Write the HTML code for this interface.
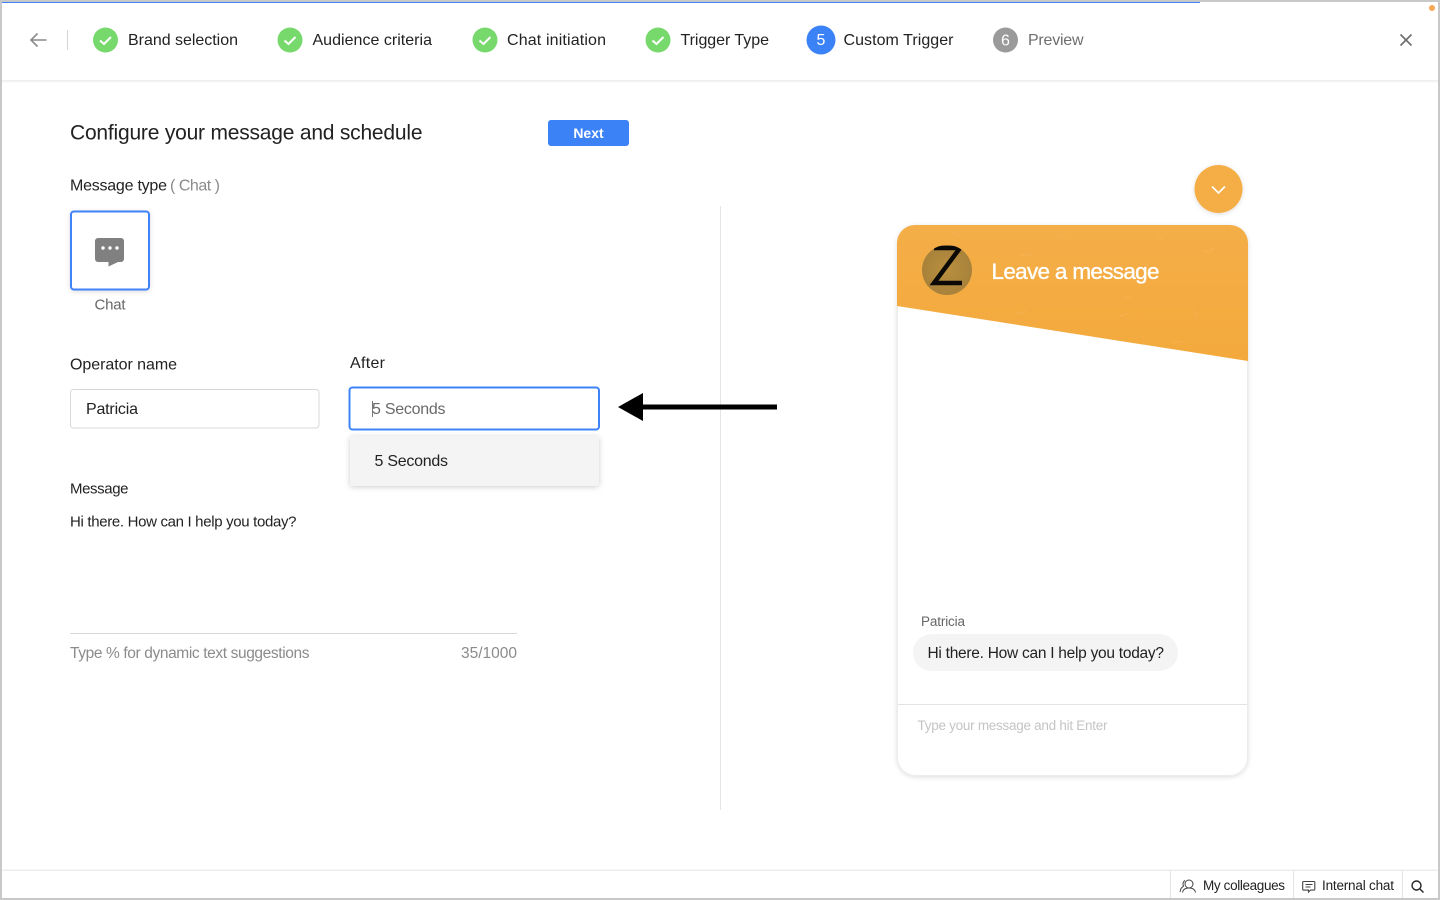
<!DOCTYPE html>
<html lang="en"><head><meta charset="utf-8"><title>Configure your message and schedule</title>
<style>
html,body{margin:0;padding:0;width:1440px;height:900px;overflow:hidden;background:#fff}
svg{display:block}
text{font-family:"Liberation Sans",Arial,sans-serif;font-size:16px;fill:#222}
</style></head><body>
<svg width="1440" height="900" viewBox="0 0 1440 900" xmlns="http://www.w3.org/2000/svg">
<defs>
<filter id="s1" x="-20%" y="-20%" width="140%" height="140%"><feDropShadow dx="0" dy="1" stdDeviation="3" flood-color="#000" flood-opacity=".2"/></filter>
<filter id="s2" x="-10%" y="-10%" width="120%" height="120%"><feDropShadow dx="0" dy="1" stdDeviation="2.5" flood-color="#000" flood-opacity=".14"/></filter>
<linearGradient id="hd" x1="0" y1="0" x2="0" y2="1"><stop offset="0" stop-color="#f4ae48"/><stop offset="1" stop-color="#f3a93c"/></linearGradient>
<radialGradient id="av" cx=".5" cy=".5" r=".6"><stop offset="0" stop-color="#b98f3f"/><stop offset="1" stop-color="#a57f3a"/></radialGradient>
<clipPath id="av-clip"><circle cx="947" cy="270" r="25"/></clipPath>
</defs>
<rect width="1440" height="900" fill="#fff"/>

<!-- Window frame and progress -->
<rect x="0" y="0" width="1440" height="2" fill="#c8c8c8"/>
<rect x="0" y="0" width="2" height="900" fill="#c8c8c8"/>
<rect x="1438" y="0" width="2" height="900" fill="#c8c8c8"/>
<rect x="0" y="898" width="1440" height="2" fill="#c8c8c8"/>
<rect x="2" y="2" width="1198" height="1" fill="#3f83f8"/>
<circle cx="1432" cy="8" r="3" fill="#f6a953"/>

<!-- Top bar -->
<rect x="2" y="82" width="1436" height="1" fill="#fafafa"/>
<rect x="2" y="81" width="1436" height="1" fill="#f6f6f6"/>
<rect x="2" y="80" width="1436" height="1" fill="#eeeeee"/>
<path d="M46.500 40H31M37.500 33.500L31 40l6.500 6.500" fill="none" stroke="#8a8a8a" stroke-width="1.600"/>
<rect x="67" y="30" width="1" height="20" fill="#d5d5d5"/>

<circle cx="105.500" cy="40" r="12.500" fill="#77d86c"/><path d="M100 40.500l4 3.500 7-7" fill="none" stroke="#fff" stroke-width="2"/>
<text x="128" y="45" textLength="110" lengthAdjust="spacing">Brand selection</text>
<circle cx="290" cy="40" r="12.500" fill="#77d86c"/><path d="M284.500 40.500l4 3.500 7-7" fill="none" stroke="#fff" stroke-width="2"/>
<text x="312.500" y="45" textLength="119.500" lengthAdjust="spacing">Audience criteria</text>
<circle cx="485" cy="40" r="12.500" fill="#77d86c"/><path d="M479.500 40.500l4 3.500 7-7" fill="none" stroke="#fff" stroke-width="2"/>
<text x="507" y="45" textLength="99" lengthAdjust="spacing">Chat initiation</text>
<circle cx="658" cy="40" r="12.500" fill="#77d86c"/><path d="M652.500 40.500l4 3.500 7-7" fill="none" stroke="#fff" stroke-width="2"/>
<text x="680.500" y="45" textLength="88.500" lengthAdjust="spacing">Trigger Type</text>
<circle cx="821" cy="40" r="14.500" fill="#3b82f6"/>
<text x="821" y="45" text-anchor="middle" style="fill:#fff">5</text>
<text x="843.500" y="45" textLength="110" lengthAdjust="spacing">Custom Trigger</text>
<circle cx="1005.500" cy="40" r="12.500" fill="#9a9a9a"/>
<text x="1005.500" y="45.500" text-anchor="middle" style="fill:#fff">6</text>
<text x="1028" y="45" textLength="55.500" lengthAdjust="spacing" style="fill:#6e6e6e">Preview</text>
<path d="M1400.500 34.500l11 11M1411.500 34.500l-11 11" stroke="#6d6d6d" stroke-width="1.600" fill="none"/>

<!-- Form -->
<text x="70" y="139.500" textLength="352.500" lengthAdjust="spacing" style="font-size:21px">Configure your message and schedule</text>
<rect x="548" y="120" width="81" height="26" rx="3" fill="#3b82f6"/>
<text x="588.500" y="138" text-anchor="middle" style="fill:#fff;font-size:14px;font-weight:700">Next</text>

<text x="70" y="190.500" textLength="97" lengthAdjust="spacing">Message type</text>
<text x="170" y="190.500" textLength="50" lengthAdjust="spacing" style="fill:#8b8b8b">( Chat )</text>
<rect x="71" y="211.500" width="78" height="78" rx="3" fill="#fff" stroke="#3f83f8" stroke-width="2" filter="url(#s2)"/>
<path d="M98 238h23a3 3 0 0 1 3 3v18a3 3 0 0 1-3 3h-3l-9.500 4.500V262H98a3 3 0 0 1-3-3v-18a3 3 0 0 1 3-3z" fill="#808080"/>
<circle cx="103" cy="248" r="1.700" fill="#fff"/><circle cx="110" cy="248" r="1.700" fill="#fff"/><circle cx="117" cy="248" r="1.700" fill="#fff"/>
<text x="94.500" y="309.500" textLength="31" lengthAdjust="spacing" style="font-size:15px;fill:#666">Chat</text>

<text x="70" y="369.500" textLength="107" lengthAdjust="spacing">Operator name</text>
<rect x="70.500" y="389.500" width="248.500" height="38.500" rx="3" fill="#fff" stroke="#d8d8d8"/>
<text x="86" y="414" textLength="52" lengthAdjust="spacing">Patricia</text>

<text x="350" y="368" textLength="35" lengthAdjust="spacing">After</text>
<rect x="349.500" y="387.500" width="249.500" height="42" rx="3" fill="#fff" stroke="#3f83f8" stroke-width="2"/>
<text x="372" y="414" textLength="73.500" lengthAdjust="spacing" style="fill:#6a6a6a">5 Seconds</text>
<rect x="372" y="401" width="1" height="16" fill="#777"/>

<rect x="350" y="436" width="249" height="50" rx="3" fill="#f4f4f4" filter="url(#s1)"/>
<text x="374.500" y="466" textLength="73.500" lengthAdjust="spacing">5 Seconds</text>

<text x="70" y="493.500" textLength="58.500" lengthAdjust="spacing" style="font-size:15px">Message</text>
<text x="70" y="526.500" textLength="226.500" lengthAdjust="spacing" style="font-size:15px">Hi there. How can I help you today?</text>
<rect x="70" y="633" width="447" height="1" fill="#d8d8d8"/>
<text x="70" y="658" textLength="239.500" lengthAdjust="spacing" style="font-size:15.500px;fill:#8b8b8b">Type % for dynamic text suggestions</text>
<text x="461" y="658" textLength="56" lengthAdjust="spacing" style="font-size:15.500px;fill:#8b8b8b">35/1000</text>

<rect x="720" y="206" width="1" height="604" fill="#e4e4e4"/>

<!-- Arrow -->
<path d="M618 407l25-14v11.500h134v5H643v11.500z" fill="#000"/>

<!-- Widget -->
<circle cx="1218.500" cy="189" r="24" fill="#f5ad45" filter="url(#s2)"/>
<path d="M1212 186.500l6.500 6.500 6.500-6.500" fill="none" stroke="#fff" stroke-width="1.600"/>
<rect x="897.500" y="225.500" width="350" height="550" rx="18" fill="#fff" stroke="#ececec" filter="url(#s2)"/>
<path d="M897 306V243a18 18 0 0 1 18-18h315a18 18 0 0 1 18 18v118z" fill="url(#hd)"/>
<g fill="none" stroke="#f7ba66" stroke-width="1" opacity=".5">
<path d="M952 231c3 3 6 4 9 6M1058 238a5 5 0 0 1 8 0M1158 240c2-4 5-4 4 0M1203 250c3 3 9 2 10-2M1020 256c4-2 8-2 12 0M1124 294a4 4 0 0 0 8 0M1016 312c4 3 8 2 10-2M1120 316l8-3M1193 310l5 8M1172 342h10"/>
</g>
<circle cx="947" cy="270" r="25" fill="url(#av)"/>
<path d="M934 248h26l-26 35h28" fill="none" stroke="#0c0a06" stroke-width="4.500" clip-path="url(#av-clip)"/>
<text x="991.500" y="279" textLength="168" lengthAdjust="spacing" style="font-size:22.500px;fill:#fff;stroke:#fff;stroke-width:.35">Leave a message</text>

<text x="921" y="626" textLength="44" lengthAdjust="spacing" style="font-size:13.500px;fill:#666">Patricia</text>
<rect x="913" y="634" width="265" height="37" rx="18.500" fill="#f4f4f4"/>
<text x="927.500" y="658" textLength="236.500" lengthAdjust="spacing" style="font-size:15.500px">Hi there. How can I help you today?</text>
<rect x="898" y="704" width="349" height="1" fill="#e3e3e3"/>
<text x="917.500" y="730" textLength="190" lengthAdjust="spacing" style="font-size:13.500px;fill:#c4c4c4">Type your message and hit Enter</text>

<!-- Footer -->
<rect x="2" y="869" width="1436" height="1" fill="#f6f6f6"/>
<rect x="2" y="870" width="1436" height="1" fill="#ececec"/>
<rect x="1170" y="871" width="1" height="27" fill="#e3e3e3"/>
<rect x="1293" y="871" width="1" height="27" fill="#e3e3e3"/>
<rect x="1402" y="871" width="1" height="27" fill="#e3e3e3"/>
<g fill="none" stroke="#444" stroke-width="1">
<circle cx="1189" cy="884" r="4"/><path d="M1182.500 892.500c.5-3 2.500-4.500 6.500-4.500s6 1.500 6.500 4.500M1185 880.500c-2 1-2.500 3.500-1.500 5.500l-2.500 2.500-1 3.500"/>
</g>
<text x="1203" y="890" textLength="82" lengthAdjust="spacing" style="font-size:13.500px">My colleagues</text>
<g fill="none" stroke="#444" stroke-width="1.100"><path d="M1303.500 881.500h10.500a.8.8 0 0 1 .8.800v7a.8.8 0 0 1-.8.800h-3.500l-2 2v-2h-5a.8.8 0 0 1-.8-.8v-7a.8.8 0 0 1 .8-.8zM1305.500 884.500h7M1305.500 887h5"/></g>
<text x="1322" y="890" textLength="72" lengthAdjust="spacing" style="font-size:13.500px">Internal chat</text>
<g fill="none" stroke="#222" stroke-width="1.400"><circle cx="1416.500" cy="885.500" r="4.500"/><path d="M1420 889l3.500 3.500"/></g>
</svg>
</body></html>
